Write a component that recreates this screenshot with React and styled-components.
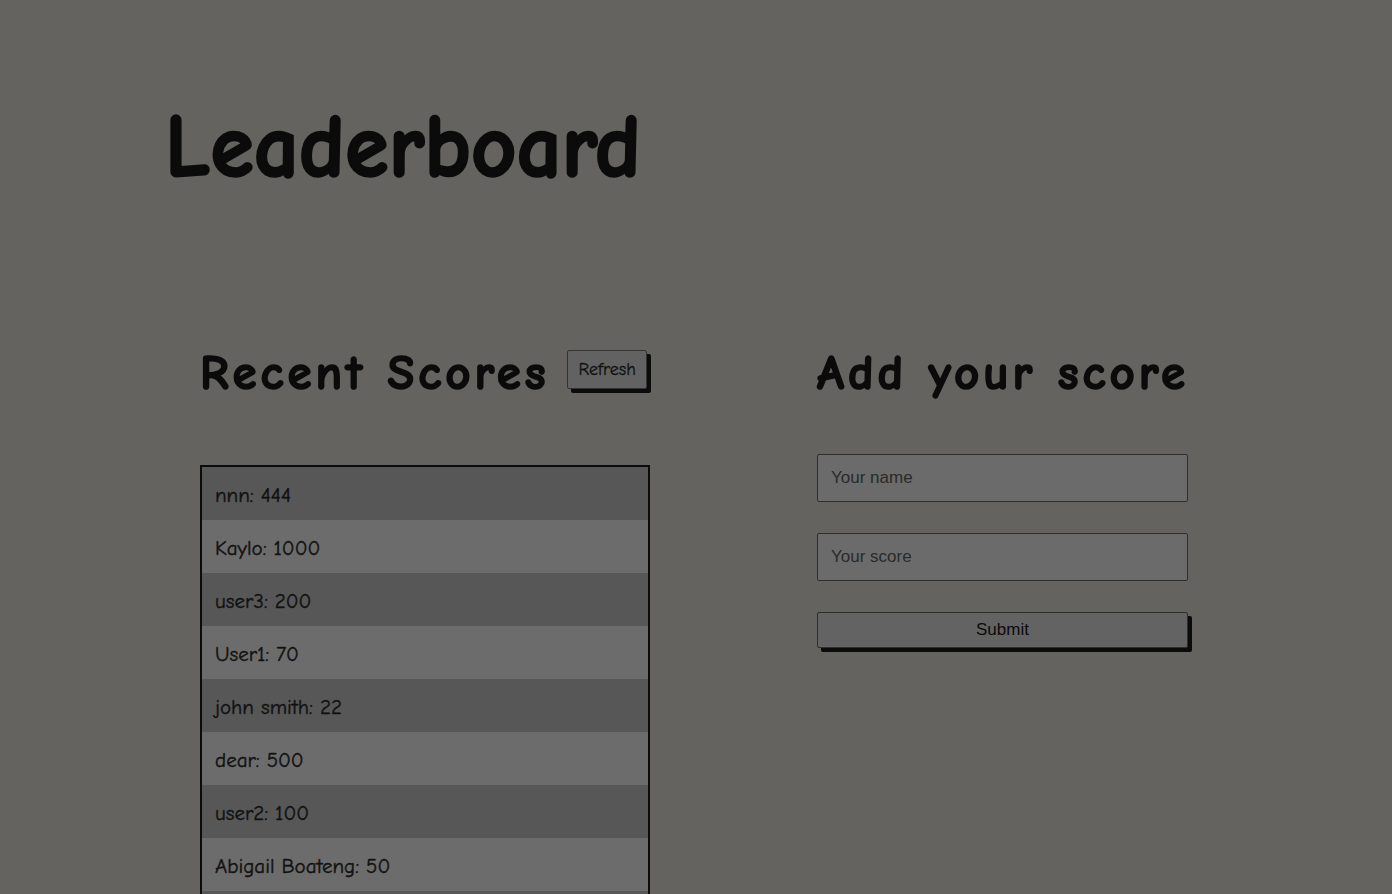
import React from 'react';
import styled, { createGlobalStyle } from 'styled-components';

const GlobalStyle = createGlobalStyle`
  body {
    margin: 0;
    background-color: #64635f;
    font-family: "Comic Sans MS", "Comic Neue", Lato, sans-serif;
    color: #0b0b0b;
  }
`;

const Page = styled.div`
  height: 894px;
  overflow: hidden;
`;

const Title = styled.h1`
  margin: 0;
  padding: 100px 0 0 165px;
  font-size: 88px;
  line-height: 96px;
  font-weight: 700;
  height: 150px;
  -webkit-text-stroke: 2.5px #0b0b0b;
  letter-spacing: 0.3px;
`;

const Columns = styled.div`
  display: flex;
  align-items: flex-start;
  gap: 167px;
  padding: 98px 0 0 200px;
`;

const Column = styled.section`
  width: ${(p) => p.width}px;
  display: flex;
  flex-direction: column;
`;

const HeadingRow = styled.div`
  display: flex;
  align-items: center;
  gap: 18px;
  height: 50px;
`;

const Heading = styled.h2`
  margin: 0;
  font-size: 49px;
  line-height: 50px;
  font-weight: 700;
  letter-spacing: 3.95px;
  white-space: nowrap;
  -webkit-text-stroke: 1.6px #0b0b0b;
`;

const RefreshButton = styled.button`
  font-family: inherit;
  font-size: 18px;
  color: #111;
  background: #626262;
  border: 1px solid #333;
  border-radius: 2px;
  height: 39px;
  padding: 0 10px;
  box-shadow: 4px 4px 0 #0b0b0b;
  margin-top: -8px;
  -webkit-text-stroke: 0.3px #111;
  cursor: pointer;
`;

const ScoreList = styled.ul`
  list-style: none;
  margin: 67px 0 0;
  padding: 0;
  border: 2px solid #0b0b0b;
  border-bottom: none;
`;

const ScoreItem = styled.li`
  height: 53px;
  display: flex;
  align-items: center;
  padding: 2px 13px 0;
  box-sizing: border-box;
  font-size: 21px;
  color: #111;
  -webkit-text-stroke: 0.4px #111;
  background: ${(p) => (p.dark ? '#575757' : '#6c6c6c')};
`;

const Form = styled.form`
  display: flex;
  flex-direction: column;
  gap: 31px;
  margin-top: 56px;
`;

const Input = styled.input`
  box-sizing: border-box;
  width: 100%;
  height: 48px;
  padding: 0 13px;
  border: 1px solid #2e2e2e;
  border-radius: 2px;
  background: #6b6b6b;
  font-family: "Liberation Sans", Arial, sans-serif;
  font-size: 17px;
  color: #1e1e1e;
  outline: none;

  &::placeholder {
    color: #2a2a2a;
  }
`;

const SubmitButton = styled.button`
  box-sizing: border-box;
  width: 100%;
  height: 36px;
  border: 1px solid #2e2e2e;
  border-radius: 2px;
  background: #636363;
  font-family: "Liberation Sans", Arial, sans-serif;
  font-size: 17px;
  color: #0b0b0b;
  box-shadow: 4px 4px 0 #0b0b0b;
  cursor: pointer;
`;

const scores = [
  { name: 'nnn', score: 444 },
  { name: 'Kaylo', score: 1000 },
  { name: 'user3', score: 200 },
  { name: 'User1', score: 70 },
  { name: 'john smith', score: 22 },
  { name: 'dear', score: 500 },
  { name: 'user2', score: 100 },
  { name: 'Abigail Boateng', score: 50 },
  { name: 'kwame', score: 10 },
];

const App = () => {
  return (
    <Page>
      <GlobalStyle />
      <Title>Leaderboard</Title>
      <Columns>
        <Column width={450}>
          <HeadingRow>
            <Heading>Recent Scores</Heading>
            <RefreshButton type="button">Refresh</RefreshButton>
          </HeadingRow>
          <ScoreList>
            {scores.map((s, i) => (
              <ScoreItem key={i} dark={i % 2 === 0}>
                {s.name}: {s.score}
              </ScoreItem>
            ))}
          </ScoreList>
        </Column>
        <Column width={371}>
          <HeadingRow>
            <Heading>Add your score</Heading>
          </HeadingRow>
          <Form onSubmit={(e) => e.preventDefault()}>
            <Input type="text" placeholder="Your name" />
            <Input type="number" placeholder="Your score" />
            <SubmitButton type="submit">Submit</SubmitButton>
          </Form>
        </Column>
      </Columns>
    </Page>
  );
};

export default App;
